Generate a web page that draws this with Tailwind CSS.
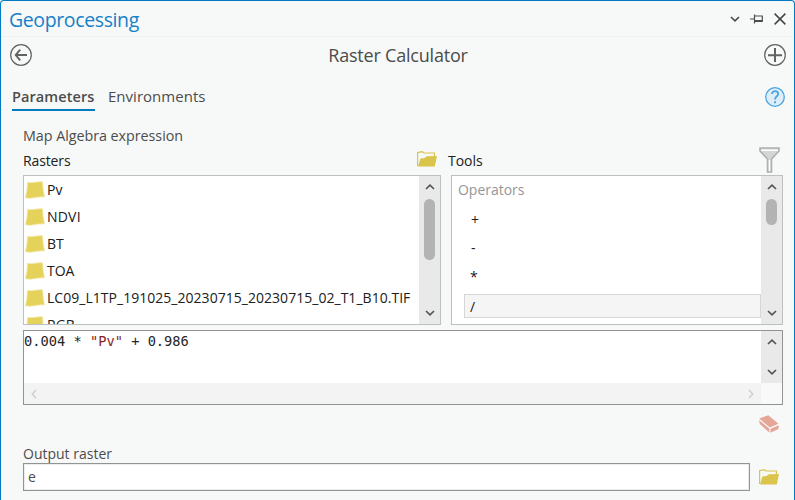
<!DOCTYPE html>
<html lang="en">
<head>
<meta charset="utf-8">
<title>Geoprocessing</title>
<script src="https://cdn.jsdelivr.net/npm/@tailwindcss/browser@4"></script>
</head>
<body class="bg-[#f7f9f8] font-['Open_Sans','Noto_Sans',sans-serif] text-[14px] text-[#4c4c4c]">
<svg class="hidden">
  <symbol id="up" viewBox="0 0 10 6"><path d="M1 5 5 1.2 9 5" fill="none" stroke="currentColor" stroke-width="1.7"/></symbol>
  <symbol id="down" viewBox="0 0 10 6"><path d="M1 1 5 4.8 9 1" fill="none" stroke="currentColor" stroke-width="1.7"/></symbol>
  <symbol id="folder" viewBox="0 0 20 16"><path d="M.6 15V1.6L5.2.7 7 2h10.4v4" fill="none" stroke="#dbc44c" stroke-width="1.2"/><path d="M1 15.6 3.4 7.6 7.6 7 9.6 5.2 20 4.9 17.8 15.6Z" fill="#dbc44c"/></symbol>
  <symbol id="raster" viewBox="0 0 20 18"><path d="M2.5 1.3C7 2.5 12 .2 17.5.8Q17.8 8 19.5 16C13 15 7 18.5.4 16.8Q2.5 9 2.5 1.3Z" fill="#e5d25a" stroke="#f3e9ae" stroke-width=".8"/></symbol>
</svg>
<div class="flex h-[500px] w-[795px] flex-col overflow-hidden rounded-t-[4px] border border-b-0 border-[#007ac2]">
  <header class="flex h-[36px] shrink-0 items-center border-b border-[#f1f3f3] pl-2 pr-[8px]">
    <h1 class="flex-1 whitespace-nowrap pt-[2px] text-[19.5px] leading-[26px] tracking-[-0.38px] text-[#1680c8]">Geoprocessing</h1>
    <svg class="mr-[10px] h-[6px] w-[10px]"><use href="#down"/></svg>
    <svg class="mr-[11px] h-[10px] w-[13px]" viewBox="0 0 13 10" fill="none" stroke="#4c4c4c"><path d="M0 5H4.5M4.5.5V9.5M4.5 2H12.3V7" stroke-width="1.2"/><path d="M4.5 7H12.8" stroke-width="2"/></svg>
    <svg class="h-[12px] w-[12px]" viewBox="0 0 12 12"><path d="M.6.6 11.4 11.4M11.4.6.6 11.4" stroke="#444" stroke-width="1.5"/></svg>
  </header>
  <div class="flex h-[36px] shrink-0 items-center justify-between pl-[9px] pr-[8px]">
    <svg class="h-[22px] w-[22px]" viewBox="0 0 22 22" fill="none" stroke="#626262"><circle cx="11" cy="11" r="10.3" stroke-width="1.2"/><path d="M6 11H17" stroke-width="2.2"/><path d="M10.2 5.6 5.7 11 10.2 16.4" stroke-width="1.9"/></svg>
    <h2 class="whitespace-nowrap text-[18px] leading-6 tracking-[-0.2px]">Raster Calculator</h2>
    <svg class="h-[22px] w-[22px]" viewBox="0 0 22 22" fill="none" stroke="#626262"><circle cx="11" cy="11" r="10.3" stroke-width="1.2"/><path d="M4 11.3H18M11 4V18" stroke-width="2"/></svg>
  </div>
  <nav class="flex h-[50px] shrink-0 items-start pl-[11px] pr-[9px] pt-[12px] text-[15px]">
    <span class="mr-[13px] h-[26px] w-[83px] whitespace-nowrap border-b-2 border-[#007ac2] text-[14.5px] font-semibold leading-[23px] tracking-[0.08px]">Parameters</span>
    <span class="flex-1 whitespace-nowrap leading-[23px] tracking-[0.02px]">Environments</span>
    <svg class="mt-[2px] h-[20px] w-[20px]" viewBox="0 0 20 20" fill="none" stroke="#4da5df"><circle cx="10" cy="10" r="9.3" fill="#deedfa" stroke-width="1.3"/><path d="M7 7.1C7 3.2 13.2 3.3 13.2 7 13.2 9.2 10 9.5 10 12.6" stroke-width="1.8"/><path d="M10 14.3V16.3" stroke-width="2"/></svg>
  </nav>
  <main class="flex flex-1 flex-col pl-[22px] pr-[11px]">
    <p class="h-[24px] whitespace-nowrap pt-px text-[14.3px] leading-[24px] tracking-[-0.03px]">Map Algebra expression</p>
    <div class="flex h-[28px] items-start text-[#202020]">
      <span class="w-[394px] leading-[27px] tracking-[-0.12px]">Rasters</span>
      <svg class="mt-[4px] h-[16px] w-[20px]"><use href="#folder"/></svg>
      <span class="ml-[11px] flex-1 leading-[27px] tracking-[-0.05px]">Tools</span>
      <svg class="mr-[3px] h-[26px] w-[21px]" viewBox="0 0 21 26"><path d="M1 1H20V4L12.5 12V25H8.5V12L1 4Z" fill="#d4d5d5" stroke="#aeb0b0" stroke-width="1.6"/><path d="M2 3.2H19M10.5 13V24" stroke="#fff" stroke-width="1.4"/></svg>
    </div>
    <div class="flex h-[150px] shrink-0 gap-[10px] text-[#202020]">
      <section class="flex w-[418px] border border-[#bdbfc1] bg-white">
        <ul class="h-[148px] flex-1 overflow-hidden pl-px [&>li]:flex [&>li]:h-[27px] [&>li]:items-center [&>li]:gap-[2px] [&>li]:whitespace-nowrap [&_svg]:h-[18px] [&_svg]:w-[20px] [&_svg]:shrink-0">
          <li><svg><use href="#raster"/></svg><span>Pv</span></li>
          <li><svg><use href="#raster"/></svg><span class="tracking-[0.2px]">NDVI</span></li>
          <li><svg><use href="#raster"/></svg><span>BT</span></li>
          <li><svg><use href="#raster"/></svg><span>TOA</span></li>
          <li><svg><use href="#raster"/></svg><span class="tracking-[0.03px]">LC09_L1TP_191025_20230715_20230715_02_T1_B10.TIF</span></li>
          <li><svg><use href="#raster"/></svg><span>RGB</span></li>
        </ul>
        <div class="flex w-[21px] flex-col items-center bg-[#e9e9e9] pb-[8px] pt-[8px] text-[#555]">
          <svg class="h-[6px] w-[10px]"><use href="#up"/></svg>
          <div class="mt-[9px] h-[61px] w-[11px] rounded-full bg-[#b3b3b3]"></div>
          <svg class="mt-auto h-[6px] w-[10px]"><use href="#down"/></svg>
        </div>
      </section>
      <section class="flex w-[332px] border border-[#bdbfc1] bg-white">
        <div class="flex h-[148px] flex-1 flex-col overflow-hidden">
          <span class="h-[29px] pl-[6px] leading-[28px] tracking-[-0.03px] text-[#969696]">Operators</span>
          <span class="h-[29px] pl-[19px] leading-[29px]">+</span>
          <span class="h-[29px] pl-[19px] leading-[28px]">-</span>
          <span class="h-[31px] pl-[18px] leading-[28px]">*</span>
          <span class="ml-[12px] h-[24px] border border-[#d6d6d6] bg-[#f5f5f5] pl-[5px] leading-[23px]">/</span>
        </div>
        <div class="flex w-[21px] flex-col items-center bg-[#e9e9e9] pb-[8px] pt-[8px] text-[#555]">
          <svg class="h-[6px] w-[10px]"><use href="#up"/></svg>
          <div class="mt-[9px] h-[26px] w-[11px] rounded-full bg-[#b3b3b3]"></div>
          <svg class="mt-auto h-[6px] w-[10px]"><use href="#down"/></svg>
        </div>
      </section>
    </div>
    <section class="mt-[5px] grid h-[75px] w-[760px] shrink-0 grid-cols-[737px_21px] grid-rows-[52px_21px] border border-[#929494] bg-white">
      <pre class="font-['DejaVu_Sans_Mono',monospace] text-[13.7px] leading-[21px] text-[#252525]">0.004 * <span class="text-[#861e24]">"Pv"</span> + 0.986</pre>
      <div class="flex flex-col items-center justify-between bg-[#e9e9e9] py-[8px] text-[#555]">
        <svg class="h-[6px] w-[10px]"><use href="#up"/></svg>
        <svg class="h-[6px] w-[10px]"><use href="#down"/></svg>
      </div>
      <div class="flex items-center justify-between bg-[#f3f3f3] px-[7px] text-[#cfcfcf]">
        <svg class="h-[10px] w-[6px]" viewBox="0 0 6 10"><path d="M5 1 1.2 5 5 9" fill="none" stroke="currentColor" stroke-width="1.5"/></svg>
        <svg class="h-[10px] w-[6px]" viewBox="0 0 6 10"><path d="M1 1 4.8 5 1 9" fill="none" stroke="currentColor" stroke-width="1.5"/></svg>
      </div>
      <div class="bg-[#f9f9f9]"></div>
    </section>
    <div class="mt-[10px] flex h-[28px] shrink-0 justify-end pr-[4px]">
      <svg class="h-[18px] w-[20px]" viewBox="0 0 20 18"><path d="M.2 3.6 9.4.2 19.4 8.8 10.8 12.4Z" fill="#e6a697"/><path d="M0 5 10.4 13.8 10.2 17.6.8 9ZM11.6 13.8 19.8 10.2 19.5 13.9 11.3 17.8Z" fill="#e6a697"/></svg>
    </div>
    <p class="h-[20px] shrink-0 whitespace-nowrap text-[14px] leading-[21px]">Output raster</p>
    <div class="flex h-[28px] shrink-0 items-center gap-[9px]">
      <div class="h-[28px] w-[727px] border border-[#929494] bg-white pl-[4px] leading-[26px] shadow-[inset_0_0_0_1px_#ececec]">e</div>
      <svg class="h-[16px] w-[20px]"><use href="#folder"/></svg>
    </div>
  </main>
</div>
</body>
</html>
